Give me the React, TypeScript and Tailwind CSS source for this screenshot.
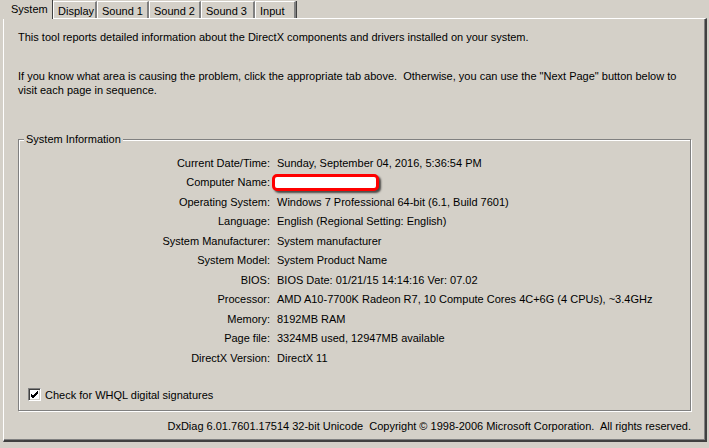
import React from "react";

const tabs = [
  { name: "Display", w: "w-[44px]" },
  { name: "Sound 1", w: "w-[52px]" },
  { name: "Sound 2", w: "w-[52px]" },
  { name: "Sound 3", w: "w-[54px]" },
  { name: "Input", w: "w-[41px]" },
];

const rows: [string, string][] = [
  ["Current Date/Time:", "Sunday, September 04, 2016, 5:36:54 PM"],
  ["Computer Name:", ""],
  ["Operating System:", "Windows 7 Professional 64-bit (6.1, Build 7601)"],
  ["Language:", "English (Regional Setting: English)"],
  ["System Manufacturer:", "System manufacturer"],
  ["System Model:", "System Product Name"],
  ["BIOS:", "BIOS Date: 01/21/15 14:14:16 Ver: 07.02"],
  ["Processor:", "AMD A10-7700K Radeon R7, 10 Compute Cores 4C+6G (4 CPUs), ~3.4GHz"],
  ["Memory:", "8192MB RAM"],
  ["Page file:", "3324MB used, 12947MB available"],
  ["DirectX Version:", "DirectX 11"],
];

export default function App() {
  return (
    <div className="w-[709px] h-[448px] bg-[#d4d0c8] text-black text-[11px] font-['Liberation_Sans',Arial,sans-serif] overflow-hidden">
      {/* tab strip */}
      <div className="flex items-end h-[18px] pl-[1px]">
        <div className="relative z-10 w-[52px] h-[19px] -mb-px bg-[#d4d0c8] pl-[10px] pt-[1px] border-r border-[#404040]">
          System
        </div>
        {tabs.map((t) => (
          <div
            key={t.name}
            className={`${t.w} h-[17px] pl-[4px] pt-[1px] border-l border-t border-white border-r-2 border-r-[#808080] shadow-[1px_0_0_#404040]`}
          >
            {t.name}
          </div>
        ))}
      </div>

      {/* panel */}
      <div className="ml-[3px] w-[704px] h-[424px] border-l border-t border-white border-r-2 border-b-2 border-r-[#404040] border-b-[#404040] shadow-[inset_-1px_-1px_0_#808080] flex flex-col">
        <div className="pl-[14px] pt-[11px] leading-[14px]">
          <p>This tool reports detailed information about the DirectX components and drivers installed on your system.</p>
          <p className="mt-[25px] w-[670px]">
            If you know what area is causing the problem, click the appropriate tab above.&nbsp; Otherwise, you can use the "Next Page" button below to visit each page in sequence.
          </p>
        </div>

        {/* group box */}
        <div className="relative ml-[14px] mt-[42px] w-[673px] h-[272px] border border-[#808080] shadow-[inset_1px_1px_0_#fff,1px_1px_0_#fff] pt-[13px]">
          <span className="absolute left-[5px] -top-[8px] bg-[#d4d0c8] px-[2px] leading-[14px]">System Information</span>
          <div className="flex flex-col">
            {rows.map(([k, v]) => (
              <div key={k} className="flex h-[19.5px] items-center">
                <span className="w-[251px] text-right">{k}</span>
                {k === "Computer Name:" ? (
                  <span className="ml-[2px] w-[107px] h-[17px] border-[3px] border-[#ff0000] rounded-[5px] bg-white shadow-[2px_2px_2px_rgba(0,0,0,0.65)]" />
                ) : (
                  <span className="ml-[7px] whitespace-nowrap">{v}</span>
                )}
              </div>
            ))}
          </div>
          <div className="flex items-center mt-[19px] ml-[9px]">
            <span className="w-[13px] h-[13px] bg-white border border-t-[#808080] border-l-[#808080] border-r-white border-b-white shadow-[inset_1px_1px_0_#404040,inset_-1px_-1px_0_#d4d0c8] flex items-center justify-center">
              <svg width="9" height="9" viewBox="0 0 9 9">
                <path d="M1 4 L3 6 L8 1 M1 5 L3 7 L8 2 M1 6 L3 8 L8 3" stroke="#000" strokeWidth="1" fill="none" />
              </svg>
            </span>
            <span className="ml-[4px]">Check for WHQL digital signatures</span>
          </div>
        </div>

        <div className="mt-[8px] pr-[14px] text-right whitespace-pre leading-[14px]">
          {"DxDiag 6.01.7601.17514 32-bit Unicode  Copyright \u00a9 1998-2006 Microsoft Corporation.  All rights reserved."}
        </div>
      </div>
    </div>
  );
}
